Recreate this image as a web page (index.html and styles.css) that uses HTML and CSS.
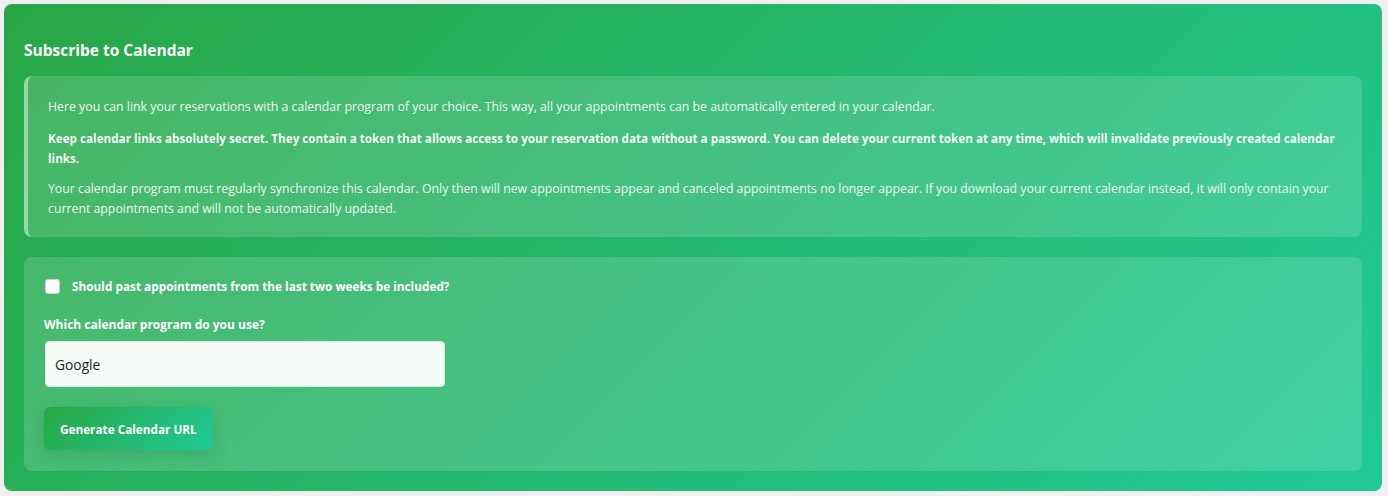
FILE: index.html
```
<!DOCTYPE html>
<html lang="en">
<head>
<meta charset="utf-8">
<title>Subscribe to Calendar</title>
<link rel="stylesheet" href="styles.css">
</head>
<body>
<section class="card">
  <h2 class="card-title">Subscribe to Calendar</h2>
  <div class="info">
    <p>Here you can link your reservations with a calendar program of your choice. This way, all your appointments can be automatically entered in your calendar.</p>
    <p class="strong">Keep calendar links absolutely secret. They contain a token that allows access to your reservation data without a password. You can delete your current token at any time, which will invalidate previously created calendar links.</p>
    <p>Your calendar program must regularly synchronize this calendar. Only then will new appointments appear and canceled appointments no longer appear. If you download your current calendar instead, it will only contain your current appointments and will not be automatically updated.</p>
  </div>
  <form class="form-box">
    <label class="check-row">
      <input type="checkbox" class="check">
      <span>Should past appointments from the last two weeks be included?</span>
    </label>
    <label class="field-label" for="program">Which calendar program do you use?</label>
    <div class="select" id="program">Google</div>
    <button type="button" class="btn">Generate Calendar URL</button>
  </form>
</section>
</body>
</html>
```

FILE: styles.css
```
* { box-sizing: border-box; }
html, body { margin: 0; }
body {
  background: #f0f0f0;
  padding: 4px 6px 5px 4px;
  font-family: "Open Sans", "Noto Sans", sans-serif;
  font-size: 12.3px;
  color: #fff;
}
.card {
  background: linear-gradient(135deg, #28a745 0%, #20c997 100%);
  border-radius: 8px;
  padding: 20px 20px 20px 20px;
  min-height: 487px;
}
.card-title {
  margin: 16px 0 16px;
  font-size: 15.5px;
  font-weight: 700;
  line-height: 20px;
}
.info {
  background: rgba(255,255,255,0.15);
  border-left: 4px solid rgba(255,255,255,0.45);
  border-radius: 8px;
  padding: 21px 20px 19px 20px;
}
.info p {
  margin: 0 0 12.5px;
  line-height: 19.5px;
  color: rgba(255,255,255,0.95);
}
.info p:last-child { margin-bottom: 0; }
.info p.strong { font-size: 11.7px; font-weight: 700; margin-bottom: 11px; }
.form-box {
  margin-top: 20px;
  background: rgba(255,255,255,0.15);
  border-radius: 8px;
  padding: 22px 20px 21px 20px;
  display: flex;
  flex-direction: column;
  align-items: flex-start;
}
.check-row {
  display: flex;
  align-items: center;
  gap: 12px;
  font-size: 11.8px;
  font-weight: 700;
  line-height: 15px;
  padding-left: 1px;
}
.check {
  appearance: none;
  -webkit-appearance: none;
  margin: 0;
  width: 15px;
  height: 15px;
  background: #fff;
  border: 1px solid #cfd4d1;
  border-radius: 3px;
}
.field-label {
  margin-top: 22px;
  font-size: 12px;
  font-weight: 700;
  line-height: 18px;
}
.select {
  margin-top: 7px;
  margin-left: 1px;
  width: 400px;
  height: 46px;
  padding: 0 9px;
  display: flex;
  align-items: center;
  background: rgba(255,255,255,0.95);
  border: 1px solid #dfe6e1;
  border-radius: 4px;
  color: #222;
  font-size: 13.8px;
}
.btn {
  margin-top: 20px;
  height: 43px;
  padding: 0 16px;
  border: none;
  border-radius: 6px;
  background: linear-gradient(135deg, #28a745 0%, #20c997 100%);
  color: #fff;
  font-family: inherit;
  font-size: 11.75px;
  font-weight: 700;
  box-shadow: 0 4px 14px rgba(30,120,60,0.25);
}
```
